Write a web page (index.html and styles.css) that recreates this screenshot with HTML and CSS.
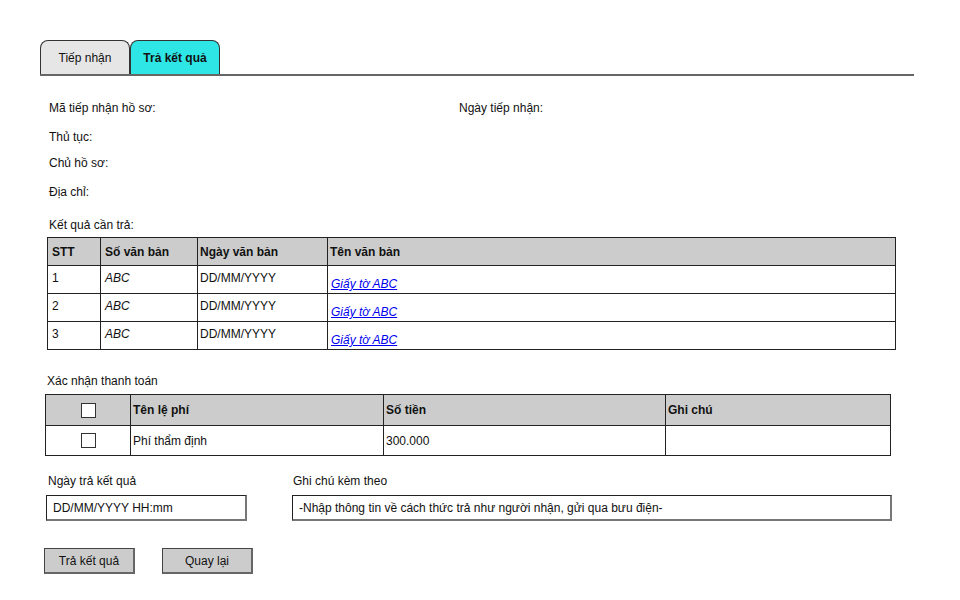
FILE: index.html
```html
<!DOCTYPE html>
<html lang="vi">
<head>
<meta charset="utf-8">
<link rel="stylesheet" href="styles.css">
</head>
<body>
<div class="page">
  <div class="tabs">
    <div class="tab">Tiếp nhận</div>
    <div class="tab active">Trả kết quả</div>
  </div>

  <div class="info">
    <div class="row r1"><span class="col-a">Mã tiếp nhận hồ sơ:</span><span>Ngày tiếp nhận:</span></div>
    <div class="row r2">Thủ tục:</div>
    <div class="row r3">Chủ hồ sơ:</div>
    <div class="row r4">Địa chỉ:</div>
    <div class="row r5">Kết quả cần trả:</div>
  </div>

  <table class="grid t1">
    <colgroup><col class="c1"><col class="c2"><col class="c3"><col></colgroup>
    <thead>
      <tr><th>STT</th><th>Số văn bản</th><th class="tight">Ngày văn bản</th><th class="tight">Tên văn bản</th></tr>
    </thead>
    <tbody>
      <tr><td>1</td><td class="it">ABC</td><td class="tight">DD/MM/YYYY</td><td class="tight link-cell"><a href="#">Giấy tờ ABC</a></td></tr>
      <tr><td>2</td><td class="it">ABC</td><td class="tight">DD/MM/YYYY</td><td class="tight link-cell"><a href="#">Giấy tờ ABC</a></td></tr>
      <tr><td>3</td><td class="it">ABC</td><td class="tight">DD/MM/YYYY</td><td class="tight link-cell"><a href="#">Giấy tờ ABC</a></td></tr>
    </tbody>
  </table>

  <div class="section-label">Xác nhận thanh toán</div>

  <table class="grid t2">
    <colgroup><col class="d1"><col class="d2"><col class="d3"><col></colgroup>
    <thead>
      <tr><th class="cb-cell"><span class="checkbox"></span></th><th class="tight">Tên lệ phí</th><th class="tight">Số tiền</th><th class="tight">Ghi chú</th></tr>
    </thead>
    <tbody>
      <tr><td class="cb-cell"><span class="checkbox"></span></td><td class="tight">Phí thẩm định</td><td class="tight">300.000</td><td></td></tr>
    </tbody>
  </table>

  <div class="fields">
    <div class="field f-date">
      <div class="field-label">Ngày trả kết quả</div>
      <div class="input">DD/MM/YYYY HH:mm</div>
    </div>
    <div class="field f-note">
      <div class="field-label">Ghi chú kèm theo</div>
      <div class="input">-Nhập thông tin về cách thức trả như người nhận, gửi qua bưu điện-</div>
    </div>
  </div>

  <div class="buttons">
    <div class="btn">Trả kết quả</div>
    <div class="btn">Quay lại</div>
  </div>
</div>
</body>
</html>
```

FILE: styles.css
```css
* { box-sizing: border-box; }
html, body { margin: 0; background: #fff; }
body {
  font-family: "Liberation Sans", Arial, sans-serif;
  font-size: 12px;
  color: #111;
  line-height: 14px;
}
.page {
  width: 960px;
  padding: 40px 0 0 40px;
}
.tabs {
  display: flex;
  width: 874px;
  height: 36px;
  border-bottom: 2px solid #666;
}
.tab {
  width: 90px;
  height: 34px;
  border: 1px solid #333;
  border-bottom: none;
  border-radius: 8px 8px 0 0;
  background: #e6e6e6;
  display: flex;
  align-items: center;
  justify-content: center;
}
.tab.active {
  background: #2ee6e6;
  font-weight: bold;
}
.info { padding-left: 9px; }
.row { height: 14px; }
.r1 { display: flex; margin-top: 25px; }
.col-a { width: 410px; }
.r2 { margin-top: 15px; }
.r3 { margin-top: 12px; }
.r4 { margin-top: 15px; }
.r5 { margin-top: 19px; }

.grid {
  border-collapse: collapse;
  table-layout: fixed;
}
.grid th, .grid td {
  border: 1px solid #222;
  padding: 0 0 0 4px;
  text-align: left;
  vertical-align: middle;
  white-space: nowrap;
  overflow: hidden;
}
.grid th {
  background: #cccccc;
  font-weight: bold;
}
.grid .tight { padding-left: 2px; }
.t1 { width: 849px; margin: 5px 0 0 7px; }
.t1 th { height: 28px; }
.t1 td { height: 28px; padding-bottom: 3px; }
.t1 .c1 { width: 53px; }
.t1 .c2 { width: 97px; }
.t1 .c3 { width: 130px; }
.t1 .link-cell { vertical-align: bottom; padding-bottom: 2px; padding-left: 3px; }
.it { font-style: italic; }
a { color: #0000ee; font-style: italic; }

.section-label { margin: 24px 0 0 7px; height: 14px; }

.t2 { width: 846px; margin: 6px 0 0 5px; }
.t2 th, .t2 td { height: 31px; }
.t2 td { height: 30px; }
.t2 .d1 { width: 85px; }
.t2 .d2 { width: 253px; }
.t2 .d3 { width: 282px; }
.cb-cell { text-align: center !important; padding: 0 !important; }
.checkbox {
  display: inline-block;
  width: 15px;
  height: 15px;
  border: 1px solid #333;
  background: #fff;
  vertical-align: middle;
}

.fields { display: flex; margin-top: 18px; }
.field-label { height: 14px; margin-bottom: 7px; }
.f-date { width: 245px; margin-left: 7px; }
.f-date .input { width: 201px; margin-left: -1px; }
.f-date .field-label { padding-left: 1px; }
.f-note { width: 600px; }
.f-note .field-label { padding-left: 1px; }
.input {
  height: 26px;
  border: 1px solid #222;
  border-right: 2px solid #777;
  border-bottom: 2px solid #777;
  padding: 0 6px;
  display: flex;
  align-items: center;
  background: #fff;
}
.f-note .input { width: 600px; }

.buttons { display: flex; gap: 27px; margin: 27px 0 0 4px; }
.btn {
  width: 91px;
  height: 26px;
  background: #cccccc;
  border: 1px solid #444;
  border-right: 2px solid #666;
  border-bottom: 2px solid #666;
  display: flex;
  align-items: center;
  justify-content: center;
}
```
